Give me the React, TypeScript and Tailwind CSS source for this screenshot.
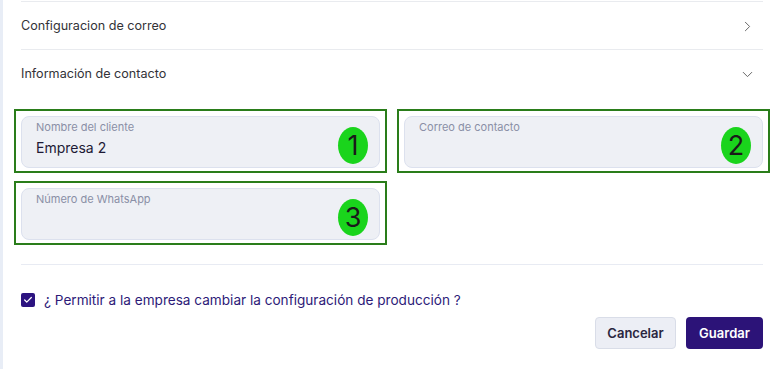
import { ChevronRight, ChevronDown, Check } from "lucide-react";

function Field({
  label,
  value,
  badge,
}: {
  label: string;
  value?: string;
  badge: string;
}) {
  return (
    <div className="border-2 border-[#2a7d1a] pt-[5px] pb-[3px] px-[5px]">
      <div className="relative h-[52px] rounded-lg border border-[#dce1ee] bg-[#eef0f5] pl-[14px] pt-[3px]">
        <div className="text-[11px] leading-[14px] text-[#8a8fa6]">{label}</div>
        {value && (
          <div className="mt-[5px] text-[14px] leading-[18px] text-[#1d1a36]">{value}</div>
        )}
        <div className="absolute right-[11px] top-[10px] flex h-[37px] w-[30px] items-center justify-center rounded-[50%] bg-[#1ad41c] text-[27px] leading-none text-[#1a1a1a]">
          {badge}
        </div>
      </div>
    </div>
  );
}

export default function App() {
  return (
    <div
      className="flex h-[369px] w-[784px] overflow-hidden bg-white"
      style={{ fontFamily: "Inter, 'Noto Sans', sans-serif" }}
    >
      <div className="w-[3px] shrink-0 bg-[#e8edf6]" />
      <div className="flex flex-1 flex-col pl-[18px] pr-[21px]">
        <div className="mt-px flex h-[48px] items-center justify-between border-t border-[#e9ebef] pt-[2px]">
          <span className="text-[12.6px] text-[#333338]">Configuracion de correo</span>
          <ChevronRight className="mr-[7px] h-[17px] w-[17px] text-[#666]" strokeWidth={1.4} />
        </div>
        <div className="flex h-[48px] items-center justify-between border-t border-[#e9ebef] pt-[2px]">
          <span className="text-[12.6px] text-[#333338]">Información de contacto</span>
          <ChevronDown className="mr-[7px] h-[17px] w-[17px] text-[#666]" strokeWidth={1.4} />
        </div>

        <div className="-mx-[7px] mt-[12px] grid grid-cols-2 gap-x-[10px] gap-y-[8px]">
          <Field label="Nombre del cliente" value="Empresa 2" badge="1" />
          <Field label="Correo de contacto" badge="2" />
          <Field label="Número de WhatsApp" badge="3" />
        </div>

        <div className="mt-[19px] border-t border-[#e8ebf3]" />

        <label className="mt-[25px] flex items-center gap-[9px]">
          <span className="flex h-[14px] w-[14px] items-center justify-center rounded-[2px] bg-[#2c1380]">
            <Check className="h-[10px] w-[10px] text-white" strokeWidth={3} />
          </span>
          <span className="text-[13.6px] text-[#2d1a78]">
            ¿ Permitir a la empresa cambiar la configuración de producción ?
          </span>
        </label>

        <div className="mt-[7px] flex justify-end gap-[10px]">
          <button className="h-[32px] w-[81px] rounded-[4px] border border-[#d9dde8] bg-[#eceef5] text-[13px] font-semibold text-[#2a2540]">
            Cancelar
          </button>
          <button className="h-[32px] w-[77px] rounded-[4px] bg-[#2c1378] text-[13px] font-semibold text-white">
            Guardar
          </button>
        </div>
      </div>
    </div>
  );
}
